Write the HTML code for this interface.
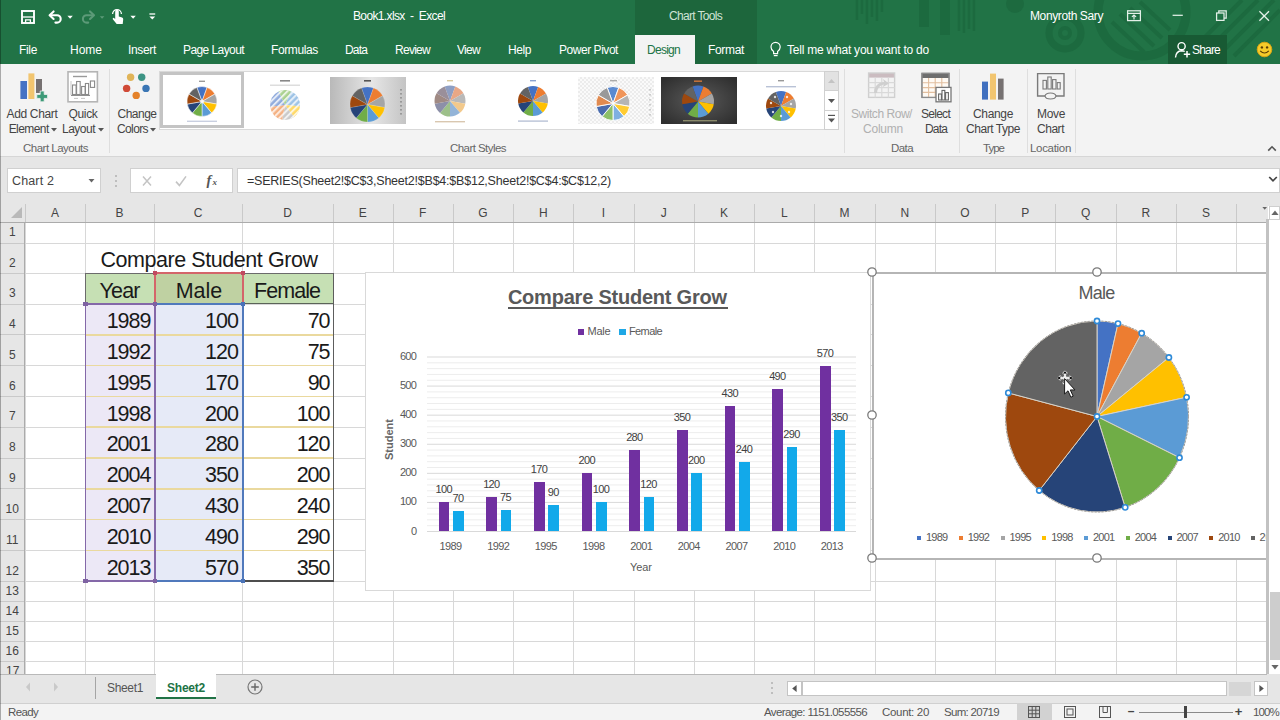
<!DOCTYPE html>
<html><head><meta charset="utf-8"><title>Book1.xlsx - Excel</title>
<style>
html,body{margin:0;padding:0;}
body{width:1280px;height:720px;overflow:hidden;position:relative;background:#fff;font-family:"Liberation Sans",sans-serif;}
.a{position:absolute;display:block;}
.t{position:absolute;white-space:pre;display:block;}
</style></head><body>
<div class='a' style='left:0px;top:0px;width:1280px;height:64px;background:#217346;'></div>
<svg class='a' style='left:850px;top:0px;' width='430' height='64' viewBox='0 0 430 64'>
<g stroke='#1c693e' fill='none' opacity='0.85'>
<path d='M7,0 v20 M12,0 v14 M17,0 v24 M22,0 v17 M27,0 v21 M32,0 v12' stroke-width='2.4'/>
<path d='M74,0 v27' stroke-width='10'/><path d='M95,0 v35' stroke-width='10'/>
<path d='M109,0 v31 M114,0 v33 M119,0 v29 M124,0 v31' stroke-width='2.4'/>
<circle cx='215' cy='33' r='16' stroke-width='7'/>
<circle cx='215' cy='33' r='5' stroke-width='4'/>
<circle cx='292' cy='12' r='44' stroke-width='9'/>
<path d='M262,22 l32,30 M270,14 l34,32 M280,8 l32,30 M290,2 l30,28' stroke-width='4'/>
<path d='M352,40 l40,-40 M362,46 l46,-46 M372,52 l52,-52 M384,56 l46,-46' stroke-width='4'/>
</g>
<circle cx='165' cy='4' r='9' fill='#1c693e' opacity='0.85'/>
</svg>
<div class='a' style='left:635px;top:0px;width:122px;height:64px;background:#1d663c;'></div>
<svg class='a' style='left:18px;top:7px;' width='150' height='22' viewBox='0 0 150 22'>
<g fill='none' stroke='#fff' stroke-width='1.9'>
<rect x='4' y='4' width='12' height='12'/>
<path d='M4,10 h12' stroke-width='1.3'/>
<path d='M7.6,16 v-3.2 h4.8 v3.2' stroke-width='1.3'/>
</g>
<g fill='none' stroke='#fff' stroke-width='2.1' stroke-linecap='round' stroke-linejoin='round'>
<path d='M35.6,4.4 L31.6,8.2 L35.6,12'/>
<path d='M32.4,8.2 H39 A3.7,3.7 0 0 1 39,15.6 H37.4'/>
</g>
<path d='M49.4,8.8 h5.4 l-2.7,3z' fill='#fff'/>
<g fill='none' stroke='#5c9a78' stroke-width='2.1' stroke-linecap='round' stroke-linejoin='round'>
<path d='M72,4.4 L76,8.2 L72,12'/>
<path d='M75.2,8.2 H68.6 A3.7,3.7 0 0 0 68.6,15.6 H70.2'/>
</g>
<path d='M81.8,9.2 h4.6 l-2.3,2.6z' fill='#5c9a78'/>
<g fill='#fff' stroke='none'>
<path d='M97.2,4.6 a1.8,1.8 0 0 1 3.6,0 v5 l3.3,0.9 q1.3,0.5 1.1,2 l-0.5,4.4 h-6 l-3.9,-4.7 q-0.5,-1.5 0.9,-1.5 l1.5,1.2 z'/>
</g>
<path d='M94.6,7 a4.4,4.4 0 0 1 8.8,0' fill='none' stroke='#fff' stroke-width='1.3'/>
<path d='M112.4,8.8 h5.4 l-2.7,3z' fill='#fff'/>
<path d='M131.4,7 h5.8' stroke='#fff' stroke-width='1.3'/>
<path d='M131.4,9.4 h5.8 l-2.9,3.2z' fill='#fff'/>
</svg>
<span class='t' style='left:353.00px;top:10.42px;font-size:12px;line-height:12px;color:#fff;letter-spacing:-0.635px;'>Book1.xlsx  -  Excel</span>
<span class='t' style='left:669.00px;top:10.42px;font-size:12px;line-height:12px;color:#cfe3d6;letter-spacing:-0.680px;'>Chart Tools</span>
<span class='t' style='left:1030.00px;top:10.42px;font-size:12px;line-height:12px;color:#fff;letter-spacing:-0.387px;'>Monyroth Sary</span>
<svg class='a' style='left:1120px;top:6px;' width='160' height='22' viewBox='0 0 160 22'>
<g fill='none' stroke='#e3f0e8' stroke-width='1.25'>
<rect x='7.6' y='4.8' width='12.8' height='9.8'/>
<path d='M7.6,7.4 h12.8'/>
<path d='M14,13.4 v-4.2 M11.9,10.9 l2.1,-1.9 l2.1,1.9' stroke-width='1.2'/>
<path d='M52.6,9.3 h10.2'/>
<rect x='96.6' y='7' width='7.4' height='7.4'/>
<path d='M98.8,7 v-2.2 h7.4 v7.4 h-2.2'/>
<path d='M139.4,5.2 l9.6,9.6 M149,5.2 l-9.6,9.6' stroke-width='1.3'/>
</g>
</svg>
<span class='t' style='left:19.00px;top:44.22px;font-size:12px;line-height:12px;color:#fff;letter-spacing:-0.336px;'>File</span>
<span class='t' style='left:70.00px;top:44.22px;font-size:12px;line-height:12px;color:#fff;'>Home</span>
<span class='t' style='left:128.00px;top:44.22px;font-size:12px;line-height:12px;color:#fff;letter-spacing:-0.336px;'>Insert</span>
<span class='t' style='left:183.00px;top:44.22px;font-size:12px;line-height:12px;color:#fff;letter-spacing:-0.581px;'>Page Layout</span>
<span class='t' style='left:271.00px;top:44.22px;font-size:12px;line-height:12px;color:#fff;letter-spacing:-0.377px;'>Formulas</span>
<span class='t' style='left:345.00px;top:44.22px;font-size:12px;line-height:12px;color:#fff;letter-spacing:-0.840px;'>Data</span>
<span class='t' style='left:395.00px;top:44.22px;font-size:12px;line-height:12px;color:#fff;letter-spacing:-0.727px;'>Review</span>
<span class='t' style='left:457.00px;top:44.22px;font-size:12px;line-height:12px;color:#fff;letter-spacing:-0.699px;'>View</span>
<span class='t' style='left:508.00px;top:44.22px;font-size:12px;line-height:12px;color:#fff;letter-spacing:-0.422px;'>Help</span>
<span class='t' style='left:559.00px;top:44.22px;font-size:12px;line-height:12px;color:#fff;letter-spacing:-0.457px;'>Power Pivot</span>
<div class='a' style='left:635px;top:35px;width:60px;height:30px;background:#f3f3f3;'></div>
<span class='t' style='left:647.00px;top:44.22px;font-size:12px;line-height:12px;color:#217346;letter-spacing:-0.727px;'>Design</span>
<span class='t' style='left:708.00px;top:44.22px;font-size:12px;line-height:12px;color:#fff;letter-spacing:-0.336px;'>Format</span>
<svg class='a' style='left:768px;top:40px;' width='16' height='20' viewBox='0 0 16 20'>
<g fill='none' stroke='#fff' stroke-width='1.2'>
<path d='M5.6,11.5 q-2.6,-2 -2.6,-4.6 a4.6,4.6 0 0 1 9.2,0 q0,2.6 -2.6,4.6 v2.2 h-4 z'/>
<path d='M5.8,15.6 h3.8'/>
</g></svg>
<span class='t' style='left:787.00px;top:44.22px;font-size:12px;line-height:12px;color:#fff;letter-spacing:-0.225px;'>Tell me what you want to do</span>
<div class='a' style='left:1168px;top:35px;width:59px;height:29px;background:#185a34;'></div>
<svg class='a' style='left:1174px;top:40px;' width='18' height='20' viewBox='0 0 18 20'>
<g fill='none' stroke='#fff' stroke-width='1.4'>
<circle cx='7.6' cy='6.2' r='3.6'/>
<path d='M1.5,17.5 q0.5,-6.5 6,-6.8 q2,0 3.2,0.8'/>
<path d='M13,11 v6.4 M9.8,14.2 h6.4' stroke-width='1.5'/>
</g></svg>
<span class='t' style='left:1192.00px;top:44.22px;font-size:12px;line-height:12px;color:#fff;letter-spacing:-0.806px;'>Share</span>
<svg class='a' style='left:1254px;top:39px;' width='22' height='22' viewBox='0 0 22 22'>
<circle cx='10.5' cy='10.5' r='7.3' fill='#f7cb2a' stroke='#d9a514' stroke-width='1'/>
<circle cx='7.9' cy='8.4' r='1.2' fill='#5a3d05'/><circle cx='13.1' cy='8.4' r='1.2' fill='#5a3d05'/>
<path d='M6.2,11.8 q4.3,4.4 8.6,0' fill='none' stroke='#5a3d05' stroke-width='1.2'/>
</svg>
<div class='a' style='left:0px;top:64px;width:1280px;height:92px;background:#f3f3f3;'></div>
<div class='a' style='left:0px;top:156px;width:1280px;height:1px;background:#d6d6d6;'></div>
<svg class='a' style='left:16px;top:70px;' width='36' height='36' viewBox='0 0 36 36'>
<rect x='4.4' y='11' width='6.6' height='18' fill='#4472c4'/>
<rect x='12.4' y='3.4' width='6' height='25.6' fill='#f2c56f'/>
<rect x='20' y='9' width='6' height='14' fill='#767171'/>
<path d='M24.2,21 h4 v3.4 h3.4 v4 h-3.4 v3.4 h-4 v-3.4 h-3.4 v-4 h3.4z' fill='#3d9a78' stroke='#f3f3f3' stroke-width='0.8'/>
</svg>
<span class='t' style='left:6.50px;top:107.52px;font-size:12px;line-height:12px;color:#444;letter-spacing:-0.337px;'>Add Chart</span>
<span class='t' style='left:8.70px;top:123.22px;font-size:12px;line-height:12px;color:#444;letter-spacing:-0.576px;'>Element</span>
<svg class='a' style='left:51px;top:127.5px;' width='6' height='4' viewBox='0 0 6 4'><path d='M0,0 h6 l-3,3.4z' fill='#555'/></svg>
<svg class='a' style='left:66px;top:70px;' width='34' height='34' viewBox='0 0 34 34'>
<rect x='2' y='1.8' width='29.4' height='30' fill='#fff' stroke='#b5b5b5' stroke-width='1.6'/>
<path d='M7,6.5 h14' stroke='#9a9a9a' stroke-width='1.4'/>
<g fill='none' stroke='#8a8a8a' stroke-width='1.1'>
<rect x='6.5' y='15' width='3.6' height='9.5'/><rect x='10.6' y='11.5' width='3.6' height='13'/>
<rect x='15.6' y='16.5' width='3.6' height='8'/><rect x='19.4' y='13.5' width='3.2' height='11'/>
<rect x='24.4' y='11' width='4.2' height='6.4'/>
</g>
<path d='M5,25.4 h19' stroke='#8a8a8a' stroke-width='1.1'/>
<path d='M5,11 v14 M8,28.4 h4 M15,28.4 h4' stroke='#c5c5c5' stroke-width='1'/>
</svg>
<span class='t' style='left:68.50px;top:107.52px;font-size:12px;line-height:12px;color:#444;letter-spacing:-0.338px;'>Quick</span>
<span class='t' style='left:62.00px;top:123.22px;font-size:12px;line-height:12px;color:#444;letter-spacing:-0.505px;'>Layout</span>
<svg class='a' style='left:98px;top:127.5px;' width='6' height='4' viewBox='0 0 6 4'><path d='M0,0 h6 l-3,3.4z' fill='#555'/></svg>
<span class='t' style='left:23.00px;top:142.78px;font-size:11.5px;line-height:11.5px;color:#666;letter-spacing:-0.508px;'>Chart Layouts</span>
<div class='a' style='left:109px;top:69px;width:1px;height:84px;background:#dedede;'></div>
<svg class='a' style='left:120px;top:70px;' width='34' height='32' viewBox='0 0 34 32'>
<circle cx='10.6' cy='7.2' r='3.7' fill='#e0b458'/><circle cx='21.7' cy='7.2' r='3.7' fill='#3d9484'/>
<circle cx='6.6' cy='18.4' r='3.7' fill='#d04a37'/><circle cx='26' cy='18.4' r='3.7' fill='#3a76b4'/>
<circle cx='16.2' cy='25.4' r='3.7' fill='#e4822a'/>
</svg>
<span class='t' style='left:117.50px;top:107.52px;font-size:12px;line-height:12px;color:#444;letter-spacing:-0.508px;'>Change</span>
<span class='t' style='left:117.00px;top:123.22px;font-size:12px;line-height:12px;color:#444;letter-spacing:-0.615px;'>Colors</span>
<svg class='a' style='left:150px;top:127.5px;' width='6' height='4' viewBox='0 0 6 4'><path d='M0,0 h6 l-3,3.4z' fill='#555'/></svg>
<div class='a' style='left:159px;top:71px;width:680px;height:59px;background:#fff;border:1px solid #d9d9d9;box-sizing:border-box;'></div>
<div class='a' style='left:160px;top:72px;width:84px;height:56px;background:#fff;border:3px solid #c4c4c4;box-sizing:border-box;'></div>
<svg class='a' style='left:180px;top:78px;' width='44' height='48' viewBox='0 0 44 48'><rect x='19' y='2.6' width='6' height='1.4' fill='#999'/><path d='M22.00,23.50 L16.86,9.41 A15,15 0 0 1 27.12,9.40 Z' fill='#4472c4' stroke='#fff' stroke-width='0.5'/><path d='M22.00,23.50 L27.12,9.40 A15,15 0 0 1 34.98,15.99 Z' fill='#ed7d31' stroke='#fff' stroke-width='0.5'/><path d='M22.00,23.50 L34.98,15.99 A15,15 0 0 1 36.77,26.09 Z' fill='#a5a5a5' stroke='#fff' stroke-width='0.5'/><path d='M22.00,23.50 L36.77,26.09 A15,15 0 0 1 31.65,34.98 Z' fill='#ffc000' stroke='#fff' stroke-width='0.5'/><path d='M22.00,23.50 L31.65,34.98 A15,15 0 0 1 22.01,38.50 Z' fill='#5b9bd5' stroke='#fff' stroke-width='0.5'/><path d='M22.00,23.50 L22.01,38.50 A15,15 0 0 1 12.37,35.00 Z' fill='#70ad47' stroke='#fff' stroke-width='0.5'/><path d='M22.00,23.50 L12.37,35.00 A15,15 0 0 1 7.23,26.12 Z' fill='#264478' stroke='#fff' stroke-width='0.5'/><path d='M22.00,23.50 L7.23,26.12 A15,15 0 0 1 9.00,16.01 Z' fill='#9e480e' stroke='#fff' stroke-width='0.5'/><path d='M22.00,23.50 L9.00,16.01 A15,15 0 0 1 16.86,9.41 Z' fill='#636363' stroke='#fff' stroke-width='0.5'/><circle cx='22' cy='23.5' r='2' fill='#fff' opacity='.7'/><rect x='7' y='42.6' width='30' height='1.4' fill='#c9cfe0'/></svg>
<svg class='a' style='left:262px;top:78px;' width='46' height='48' viewBox='0 0 46 48'><rect x='18' y='2' width='10' height='1.6' fill='#888'/><rect x='8' y='6.6' width='30' height='1.2' fill='#d5d5d5'/><defs><pattern id='st' width='4.4' height='4.4' patternUnits='userSpaceOnUse' patternTransform='rotate(-45)'><rect width='4.4' height='2' fill='#fff' opacity='.75'/></pattern></defs><path d='M23.00,27.00 L28.84,13.18 A15,15 0 0 1 37.94,28.29 Z' fill='#9dc3e6'/><path d='M23.00,27.00 L37.94,28.29 A15,15 0 0 1 32.04,38.97 Z' fill='#ffd966'/><path d='M23.00,27.00 L32.04,38.97 A15,15 0 0 1 20.16,41.73 Z' fill='#c9c9c9'/><path d='M23.00,27.00 L20.16,41.73 A15,15 0 0 1 8.11,28.85 Z' fill='#f4b183'/><path d='M23.00,27.00 L8.11,28.85 A15,15 0 0 1 16.64,13.41 Z' fill='#8faadc'/><path d='M23.00,27.00 L16.64,13.41 A15,15 0 0 1 28.84,13.18 Z' fill='#a9d18e'/><circle cx='23' cy='27' r='15' fill='url(#st)'/></svg>
<div class='a' style='left:330px;top:77px;width:76px;height:47px;background:linear-gradient(90deg,#b9b9b9,#e6e6e6 55%,#c4c4c4);'></div>
<svg class='a' style='left:330px;top:77px;' width='76' height='47' viewBox='0 0 76 47'><rect x='34' y='3' width='7' height='1.6' fill='#555'/><path d='M37.50,27.50 L31.50,11.06 A17.5,17.5 0 0 1 43.47,11.05 Z' fill='#4472c4' stroke='#ffffff55' stroke-width='0.4'/><path d='M37.50,27.50 L43.47,11.05 A17.5,17.5 0 0 1 52.65,18.74 Z' fill='#ed7d31' stroke='#ffffff55' stroke-width='0.4'/><path d='M37.50,27.50 L52.65,18.74 A17.5,17.5 0 0 1 54.74,30.52 Z' fill='#a5a5a5' stroke='#ffffff55' stroke-width='0.4'/><path d='M37.50,27.50 L54.74,30.52 A17.5,17.5 0 0 1 48.76,40.90 Z' fill='#ffc000' stroke='#ffffff55' stroke-width='0.4'/><path d='M37.50,27.50 L48.76,40.90 A17.5,17.5 0 0 1 37.52,45.00 Z' fill='#5b9bd5' stroke='#ffffff55' stroke-width='0.4'/><path d='M37.50,27.50 L37.52,45.00 A17.5,17.5 0 0 1 26.26,40.92 Z' fill='#70ad47' stroke='#ffffff55' stroke-width='0.4'/><path d='M37.50,27.50 L26.26,40.92 A17.5,17.5 0 0 1 20.27,30.55 Z' fill='#264478' stroke='#ffffff55' stroke-width='0.4'/><path d='M37.50,27.50 L20.27,30.55 A17.5,17.5 0 0 1 22.34,18.76 Z' fill='#9e480e' stroke='#ffffff55' stroke-width='0.4'/><path d='M37.50,27.50 L22.34,18.76 A17.5,17.5 0 0 1 31.50,11.06 Z' fill='#636363' stroke='#ffffff55' stroke-width='0.4'/><g fill='#999'><rect x='70' y='12' width='2' height='1.6'/><rect x='70' y='16' width='2' height='1.6'/><rect x='70' y='20' width='2' height='1.6'/><rect x='70' y='24' width='2' height='1.6'/><rect x='70' y='28' width='2' height='1.6'/><rect x='70' y='32' width='2' height='1.6'/><rect x='70' y='36' width='2' height='1.6'/></g></svg>
<svg class='a' style='left:428px;top:78px;' width='44' height='48' viewBox='0 0 44 48'><rect x='19' y='2' width='6' height='1.4' fill='#d8c89a'/><path d='M22.00,23.00 L16.69,8.44 A15.5,15.5 0 0 1 27.29,8.43 Z' fill='#8e9fc4'/><path d='M22.00,23.00 L27.29,8.43 A15.5,15.5 0 0 1 35.42,15.24 Z' fill='#e8a786'/><path d='M22.00,23.00 L35.42,15.24 A15.5,15.5 0 0 1 37.27,25.68 Z' fill='#b9b9b9'/><path d='M22.00,23.00 L37.27,25.68 A15.5,15.5 0 0 1 31.97,34.86 Z' fill='#f2c98c'/><path d='M22.00,23.00 L31.97,34.86 A15.5,15.5 0 0 1 22.01,38.50 Z' fill='#93b4d8'/><path d='M22.00,23.00 L22.01,38.50 A15.5,15.5 0 0 1 12.05,34.88 Z' fill='#9dc08a'/><path d='M22.00,23.00 L12.05,34.88 A15.5,15.5 0 0 1 6.74,25.71 Z' fill='#8c8fa8'/><path d='M22.00,23.00 L6.74,25.71 A15.5,15.5 0 0 1 8.57,15.26 Z' fill='#a08a84'/><path d='M22.00,23.00 L8.57,15.26 A15.5,15.5 0 0 1 16.69,8.44 Z' fill='#9a8f9a'/><rect x='7' y='43' width='30' height='1.4' fill='#d9c7b0'/></svg>
<svg class='a' style='left:511px;top:78px;' width='44' height='48' viewBox='0 0 44 48'><rect x='19' y='2' width='6' height='1.4' fill='#8aa2d0'/><path d='M22.00,23.00 L16.86,8.91 A15,15 0 0 1 27.12,8.90 Z' fill='#4472c4'/><path d='M22.00,23.00 L27.12,8.90 A15,15 0 0 1 34.98,15.49 Z' fill='#ed7d31'/><path d='M22.00,23.00 L34.98,15.49 A15,15 0 0 1 36.77,25.59 Z' fill='#a5a5a5'/><path d='M22.00,23.00 L36.77,25.59 A15,15 0 0 1 31.65,34.48 Z' fill='#ffc000'/><path d='M22.00,23.00 L31.65,34.48 A15,15 0 0 1 22.01,38.00 Z' fill='#5b9bd5'/><path d='M22.00,23.00 L22.01,38.00 A15,15 0 0 1 12.37,34.50 Z' fill='#70ad47'/><path d='M22.00,23.00 L12.37,34.50 A15,15 0 0 1 7.23,25.62 Z' fill='#264478'/><path d='M22.00,23.00 L7.23,25.62 A15,15 0 0 1 9.00,15.51 Z' fill='#9e480e'/><path d='M22.00,23.00 L9.00,15.51 A15,15 0 0 1 16.86,8.91 Z' fill='#636363'/><rect x='7' y='42.4' width='30' height='1.4' fill='#b9c2d6'/></svg>
<div class='a' style='left:578px;top:77px;width:76px;height:47px;background:#ececec;'></div>
<svg class='a' style='left:578px;top:77px;' width='76' height='47' viewBox='0 0 76 47'><defs><pattern id='ck' width='4' height='4' patternUnits='userSpaceOnUse'><rect width='2' height='2' fill='#fafafa'/><rect x='2' y='2' width='2' height='2' fill='#fafafa'/></pattern></defs><rect width='76' height='47' fill='url(#ck)'/><rect x='32' y='3' width='7' height='1.4' fill='#aaa'/><path d='M35.00,26.50 L29.17,10.53 A17,17 0 0 1 40.80,10.52 Z' fill='#5b8ad0' stroke='#fff' stroke-width='0.9'/><path d='M35.00,26.50 L40.80,10.52 A17,17 0 0 1 49.71,17.99 Z' fill='#f0955a' stroke='#fff' stroke-width='0.9'/><path d='M35.00,26.50 L49.71,17.99 A17,17 0 0 1 51.74,29.44 Z' fill='#b5b5b5' stroke='#fff' stroke-width='0.9'/><path d='M35.00,26.50 L51.74,29.44 A17,17 0 0 1 45.94,39.51 Z' fill='#ffcc33' stroke='#fff' stroke-width='0.9'/><path d='M35.00,26.50 L45.94,39.51 A17,17 0 0 1 35.02,43.50 Z' fill='#7fb0e0' stroke='#fff' stroke-width='0.9'/><path d='M35.00,26.50 L35.02,43.50 A17,17 0 0 1 24.08,39.53 Z' fill='#8dc06a' stroke='#fff' stroke-width='0.9'/><path d='M35.00,26.50 L24.08,39.53 A17,17 0 0 1 18.26,29.47 Z' fill='#4a6cae' stroke='#fff' stroke-width='0.9'/><path d='M35.00,26.50 L18.26,29.47 A17,17 0 0 1 20.27,18.01 Z' fill='#e08a50' stroke='#fff' stroke-width='0.9'/><path d='M35.00,26.50 L20.27,18.01 A17,17 0 0 1 29.17,10.53 Z' fill='#999' stroke='#fff' stroke-width='0.9'/><g fill='#ccc'><rect x='71' y='12' width='2' height='1.6'/><rect x='71' y='17' width='2' height='1.6'/><rect x='71' y='22' width='2' height='1.6'/><rect x='71' y='27' width='2' height='1.6'/><rect x='71' y='32' width='2' height='1.6'/><rect x='71' y='37' width='2' height='1.6'/></g></svg>
<div class='a' style='left:661px;top:77px;width:76px;height:47px;background:radial-gradient(ellipse at center,#5a5a5a,#2f2f2f 90%);'></div>
<svg class='a' style='left:661px;top:77px;' width='76' height='47' viewBox='0 0 76 47'><rect x='33' y='3.4' width='8' height='1.6' fill='#c0703a'/><path d='M37.00,24.50 L31.51,9.47 A16,16 0 0 1 42.46,9.46 Z' fill='#4472c4'/><path d='M37.00,24.50 L42.46,9.46 A16,16 0 0 1 50.85,16.49 Z' fill='#ed7d31'/><path d='M37.00,24.50 L50.85,16.49 A16,16 0 0 1 52.76,27.26 Z' fill='#a5a5a5'/><path d='M37.00,24.50 L52.76,27.26 A16,16 0 0 1 47.30,36.75 Z' fill='#ffc000'/><path d='M37.00,24.50 L47.30,36.75 A16,16 0 0 1 37.01,40.50 Z' fill='#5b9bd5'/><path d='M37.00,24.50 L37.01,40.50 A16,16 0 0 1 26.73,36.77 Z' fill='#70ad47'/><path d='M37.00,24.50 L26.73,36.77 A16,16 0 0 1 21.25,27.29 Z' fill='#264478'/><path d='M37.00,24.50 L21.25,27.29 A16,16 0 0 1 23.14,16.51 Z' fill='#9e480e'/><path d='M37.00,24.50 L23.14,16.51 A16,16 0 0 1 31.51,9.47 Z' fill='#636363'/><rect x='22' y='43' width='34' height='1.4' fill='#8a8a6a'/></svg>
<svg class='a' style='left:758px;top:78px;' width='46' height='50' viewBox='0 0 46 50'><rect x='20' y='2' width='6' height='1.4' fill='#999'/><rect x='8' y='8' width='30' height='1.4' fill='#b9c2d6'/><path d='M23.00,28.00 L17.86,13.91 A15,15 0 0 1 28.12,13.90 Z' fill='#4472c4'/><path d='M23.00,28.00 L28.12,13.90 A15,15 0 0 1 35.98,20.49 Z' fill='#ed7d31'/><path d='M23.00,28.00 L35.98,20.49 A15,15 0 0 1 37.77,30.59 Z' fill='#a5a5a5'/><path d='M23.00,28.00 L37.77,30.59 A15,15 0 0 1 32.65,39.48 Z' fill='#ffc000'/><path d='M23.00,28.00 L32.65,39.48 A15,15 0 0 1 23.01,43.00 Z' fill='#5b9bd5'/><path d='M23.00,28.00 L23.01,43.00 A15,15 0 0 1 13.37,39.50 Z' fill='#70ad47'/><path d='M23.00,28.00 L13.37,39.50 A15,15 0 0 1 8.23,30.62 Z' fill='#264478'/><path d='M23.00,28.00 L8.23,30.62 A15,15 0 0 1 10.00,20.51 Z' fill='#9e480e'/><path d='M23.00,28.00 L10.00,20.51 A15,15 0 0 1 17.86,13.91 Z' fill='#636363'/><g fill='#fff' opacity='.8'><circle cx='29' cy='19' r='1.2'/><circle cx='33' cy='26' r='1.2'/><circle cx='31' cy='34' r='1.2'/><circle cx='23' cy='38' r='1.2'/><circle cx='15' cy='34' r='1.2'/><circle cx='13' cy='25' r='1.2'/><circle cx='17' cy='19' r='1.2'/></g></svg>
<div class='a' style='left:824px;top:71px;width:15px;height:59px;background:#fff;border:1px solid #d0d0d0;box-sizing:border-box;'></div>
<div class='a' style='left:824px;top:71px;width:15px;height:20px;background:#e2e2e2;border:1px solid #d0d0d0;box-sizing:border-box;'></div>
<div class='a' style='left:824px;top:110px;width:15px;height:1px;background:#d0d0d0;'></div>
<svg class='a' style='left:827px;top:78px;' width='9' height='6' viewBox='0 0 9 6'><path d='M1,5 h7 l-3.5,-4z' fill='#c3c3c3'/></svg>
<svg class='a' style='left:827px;top:98px;' width='9' height='6' viewBox='0 0 9 6'><path d='M1,1 h7 l-3.5,4z' fill='#555'/></svg>
<svg class='a' style='left:827px;top:114px;' width='9' height='10' viewBox='0 0 9 10'><path d='M1,1.4 h7' stroke='#555' stroke-width='1.2'/><path d='M1,4.4 h7 l-3.5,4z' fill='#555'/></svg>
<span class='t' style='left:450.00px;top:142.78px;font-size:11.5px;line-height:11.5px;color:#666;letter-spacing:-0.553px;'>Chart Styles</span>
<div class='a' style='left:844px;top:69px;width:1px;height:84px;background:#dedede;'></div>
<svg class='a' style='left:866px;top:70px;' width='32' height='30' viewBox='0 0 32 30'>
<rect x='2.6' y='3' width='26' height='4.6' fill='#cbbcc0'/>
<rect x='2.6' y='3' width='26' height='24.4' fill='none' stroke='#cfcfcf' stroke-width='1.4'/>
<g stroke='#d9d9d9' stroke-width='1.2'><path d='M9.2,7.6 v19.8 M15.8,7.6 v19.8 M22.4,7.6 v19.8 M2.6,12.6 h26 M2.6,17.6 h26 M2.6,22.6 h26'/></g>
<path d='M8,23 q0,-10 10,-11 l-1,-3 l6,4.4 l-6,3.6 l0.6,-2.6 q-6,1 -6.6,8.6z' fill='#cfcfcf'/>
</svg>
<span class='t' style='left:851.00px;top:107.52px;font-size:12px;line-height:12px;color:#b0b0b0;letter-spacing:-0.457px;'>Switch Row/</span>
<span class='t' style='left:863.00px;top:123.22px;font-size:12px;line-height:12px;color:#b0b0b0;letter-spacing:-0.227px;'>Column</span>
<svg class='a' style='left:919px;top:70px;' width='34' height='34' viewBox='0 0 34 34'>
<rect x='3' y='3.4' width='27' height='4.6' fill='#6e6e6e'/>
<rect x='3' y='3.4' width='27' height='24' fill='#fff' fill-opacity='0' stroke='#8c8c8c' stroke-width='1.3'/>
<rect x='3.6' y='8' width='25.8' height='18.8' fill='#fffaf4'/>
<rect x='3' y='3.4' width='27' height='4.6' fill='#6e6e6e'/>
<g stroke='#e2bf9f' stroke-width='1.1'><path d='M9.6,8 v19 M16.2,8 v19 M22.8,8 v19 M3,12.8 h27 M3,17.6 h27 M3,22.4 h27'/></g>
<rect x='3' y='3.4' width='27' height='24' fill='none' stroke='#8c8c8c' stroke-width='1.3'/>
<rect x='17' y='17.4' width='15' height='14.4' fill='#fff' stroke='#777' stroke-width='1.3'/>
<g fill='none' stroke='#666' stroke-width='1.1'><rect x='19.6' y='24' width='2.8' height='6'/><rect x='23' y='20.4' width='2.8' height='9.6'/><rect x='26.6' y='22.6' width='2.8' height='7.4'/></g>
</svg>
<span class='t' style='left:921.00px;top:107.52px;font-size:12px;line-height:12px;color:#444;letter-spacing:-0.727px;'>Select</span>
<span class='t' style='left:925.00px;top:123.22px;font-size:12px;line-height:12px;color:#444;letter-spacing:-0.840px;'>Data</span>
<span class='t' style='left:891.00px;top:142.78px;font-size:11.5px;line-height:11.5px;color:#666;letter-spacing:-0.574px;'>Data</span>
<div class='a' style='left:959px;top:69px;width:1px;height:84px;background:#dedede;'></div>
<svg class='a' style='left:978px;top:70px;' width='30' height='32' viewBox='0 0 30 32'>
<rect x='4' y='11.6' width='6' height='18' fill='#3f6fbf'/>
<rect x='12' y='3.6' width='6' height='26' fill='#f2c56f'/>
<rect x='20' y='8.6' width='5.6' height='21' fill='#767171'/>
</svg>
<span class='t' style='left:973.00px;top:107.52px;font-size:12px;line-height:12px;color:#444;letter-spacing:-0.341px;'>Change</span>
<span class='t' style='left:966.00px;top:123.22px;font-size:12px;line-height:12px;color:#444;letter-spacing:-0.448px;'>Chart Type</span>
<span class='t' style='left:983.00px;top:142.78px;font-size:11.5px;line-height:11.5px;color:#666;letter-spacing:-0.984px;'>Type</span>
<div class='a' style='left:1027px;top:69px;width:1px;height:84px;background:#dedede;'></div>
<svg class='a' style='left:1034px;top:70px;' width='34' height='32' viewBox='0 0 34 32'>
<g fill='none' stroke='#7a7a7a' stroke-width='1.4'>
<path d='M11,26 H3.6 V3.6 H30 V26 H22'/>
<path d='M11,26 q0.5,-3 5.5,-3 q5,0 5.5,3 q-0.5,3 -5.5,3 q-5,0 -5.5,-3z' stroke-width='1.2'/>
<rect x='9' y='10.4' width='3.4' height='8.6' stroke-width='1.1'/><rect x='13.8' y='7' width='3.4' height='12' stroke-width='1.1'/>
<rect x='18.6' y='9.6' width='3.4' height='9.4' stroke-width='1.1'/><rect x='23.2' y='12.6' width='3' height='6.4' stroke-width='1.1'/>
</g></svg>
<span class='t' style='left:1037.00px;top:107.52px;font-size:12px;line-height:12px;color:#444;letter-spacing:-0.336px;'>Move</span>
<span class='t' style='left:1037.00px;top:123.22px;font-size:12px;line-height:12px;color:#444;letter-spacing:-0.469px;'>Chart</span>
<span class='t' style='left:1030.00px;top:142.78px;font-size:11.5px;line-height:11.5px;color:#666;letter-spacing:-0.311px;'>Location</span>
<div class='a' style='left:1075px;top:69px;width:1px;height:84px;background:#dedede;'></div>
<svg class='a' style='left:1266px;top:143.5px;' width='12' height='9' viewBox='0 0 12 9'><path d='M2.2,6.6 L6,2.8 L9.8,6.6' fill='none' stroke='#555' stroke-width='1.6'/></svg>
<div class='a' style='left:0px;top:157px;width:1280px;height:43px;background:#e6e6e6;'></div>
<div class='a' style='left:7px;top:168px;width:94px;height:25px;background:#fff;border:1px solid #d0d0d0;box-sizing:border-box;'></div>
<span class='t' style='left:12.00px;top:174.87px;font-size:12.5px;line-height:12.5px;color:#444;letter-spacing:0.143px;'>Chart 2</span>
<svg class='a' style='left:86.5px;top:178px;' width='10' height='7' viewBox='0 0 10 7'><path d='M1.5,1 h6 l-3,3.6z' fill='#666'/></svg>
<svg class='a' style='left:113px;top:173px;' width='6' height='16' viewBox='0 0 6 16'><g fill='#b0b0b0'><circle cx='3' cy='3' r='1'/><circle cx='3' cy='8' r='1'/><circle cx='3' cy='13' r='1'/></g></svg>
<div class='a' style='left:130px;top:168px;width:103px;height:25px;background:#fff;border:1px solid #d0d0d0;box-sizing:border-box;'></div>
<svg class='a' style='left:140px;top:174px;' width='90' height='14' viewBox='0 0 90 14'>
<path d='M3,2.4 l8,9 M11,2.4 l-8,9' stroke='#c4c4c4' stroke-width='1.5' fill='none'/>
<path d='M36,7.6 l3.4,3.8 l6.6,-9' stroke='#c4c4c4' stroke-width='1.6' fill='none'/>
</svg>
<span class='t' style='left:206.50px;top:173.16px;font-size:14.5px;line-height:14.5px;color:#555;font-weight:700;font-family:"Liberation Serif";'><i>f</i></span>
<span class='t' style='left:212.50px;top:178.44px;font-size:9px;line-height:9px;color:#555;font-weight:700;font-family:"Liberation Serif";'><i>x</i></span>
<div class='a' style='left:237px;top:168px;width:1043px;height:25px;background:#fff;border:1px solid #d0d0d0;box-sizing:border-box;'></div>
<span class='t' style='left:247.00px;top:174.87px;font-size:12.5px;line-height:12.5px;color:#333;letter-spacing:-0.224px;'>=SERIES(Sheet2!$C$3,Sheet2!$B$4:$B$12,Sheet2!$C$4:$C$12,2)</span>
<svg class='a' style='left:1267px;top:175px;' width='12' height='9' viewBox='0 0 12 9'><path d='M2.2,2 L6,5.8 L9.8,2' fill='none' stroke='#444' stroke-width='1.7'/></svg>
<div class='a' style='left:0px;top:200px;width:1267px;height:474px;background:#fff;'></div>
<div class='a' style='left:0px;top:200px;width:1280px;height:22px;background:#e6e6e6;'></div>
<div class='a' style='left:0px;top:222px;width:1267px;height:1px;background:#ababab;'></div>
<span class='t' style='left:50.99px;top:206.72px;font-size:12px;line-height:12px;color:#444;'>A</span>
<span class='t' style='left:115.49px;top:206.72px;font-size:12px;line-height:12px;color:#444;'>B</span>
<span class='t' style='left:193.66px;top:206.72px;font-size:12px;line-height:12px;color:#444;'>C</span>
<span class='t' style='left:283.16px;top:206.72px;font-size:12px;line-height:12px;color:#444;'>D</span>
<span class='t' style='left:358.79px;top:206.72px;font-size:12px;line-height:12px;color:#444;'>E</span>
<span class='t' style='left:419.08px;top:206.72px;font-size:12px;line-height:12px;color:#444;'>F</span>
<span class='t' style='left:478.33px;top:206.72px;font-size:12px;line-height:12px;color:#444;'>G</span>
<span class='t' style='left:538.91px;top:206.72px;font-size:12px;line-height:12px;color:#444;'>H</span>
<span class='t' style='left:601.83px;top:206.72px;font-size:12px;line-height:12px;color:#444;'>I</span>
<span class='t' style='left:660.75px;top:206.72px;font-size:12px;line-height:12px;color:#444;'>J</span>
<span class='t' style='left:719.99px;top:206.72px;font-size:12px;line-height:12px;color:#444;'>K</span>
<span class='t' style='left:780.91px;top:206.72px;font-size:12px;line-height:12px;color:#444;'>L</span>
<span class='t' style='left:839.50px;top:206.72px;font-size:12px;line-height:12px;color:#444;'>M</span>
<span class='t' style='left:900.41px;top:206.72px;font-size:12px;line-height:12px;color:#444;'>N</span>
<span class='t' style='left:960.33px;top:206.72px;font-size:12px;line-height:12px;color:#444;'>O</span>
<span class='t' style='left:1021.24px;top:206.72px;font-size:12px;line-height:12px;color:#444;'>P</span>
<span class='t' style='left:1080.88px;top:206.72px;font-size:12px;line-height:12px;color:#444;'>Q</span>
<span class='t' style='left:1141.46px;top:206.72px;font-size:12px;line-height:12px;color:#444;'>R</span>
<span class='t' style='left:1202.04px;top:206.72px;font-size:12px;line-height:12px;color:#444;'>S</span>
<div class='a' style='left:25px;top:204px;width:1px;height:18px;background:#c9c9c9;'></div>
<div class='a' style='left:25px;top:223px;width:1px;height:451px;background:#d8d8d8;'></div>
<div class='a' style='left:85px;top:204px;width:1px;height:18px;background:#c9c9c9;'></div>
<div class='a' style='left:85px;top:223px;width:1px;height:451px;background:#d8d8d8;'></div>
<div class='a' style='left:154px;top:204px;width:1px;height:18px;background:#c9c9c9;'></div>
<div class='a' style='left:154px;top:223px;width:1px;height:451px;background:#d8d8d8;'></div>
<div class='a' style='left:242px;top:204px;width:1px;height:18px;background:#c9c9c9;'></div>
<div class='a' style='left:242px;top:223px;width:1px;height:451px;background:#d8d8d8;'></div>
<div class='a' style='left:333px;top:204px;width:1px;height:18px;background:#c9c9c9;'></div>
<div class='a' style='left:333px;top:223px;width:1px;height:451px;background:#d8d8d8;'></div>
<div class='a' style='left:392.6px;top:204px;width:1px;height:18px;background:#c9c9c9;'></div>
<div class='a' style='left:392.6px;top:223px;width:1px;height:451px;background:#d8d8d8;'></div>
<div class='a' style='left:452.9px;top:204px;width:1px;height:18px;background:#c9c9c9;'></div>
<div class='a' style='left:452.9px;top:223px;width:1px;height:451px;background:#d8d8d8;'></div>
<div class='a' style='left:513.1px;top:204px;width:1px;height:18px;background:#c9c9c9;'></div>
<div class='a' style='left:513.1px;top:223px;width:1px;height:451px;background:#d8d8d8;'></div>
<div class='a' style='left:573.4px;top:204px;width:1px;height:18px;background:#c9c9c9;'></div>
<div class='a' style='left:573.4px;top:223px;width:1px;height:451px;background:#d8d8d8;'></div>
<div class='a' style='left:633.6px;top:204px;width:1px;height:18px;background:#c9c9c9;'></div>
<div class='a' style='left:633.6px;top:223px;width:1px;height:451px;background:#d8d8d8;'></div>
<div class='a' style='left:693.9px;top:204px;width:1px;height:18px;background:#c9c9c9;'></div>
<div class='a' style='left:693.9px;top:223px;width:1px;height:451px;background:#d8d8d8;'></div>
<div class='a' style='left:754.1px;top:204px;width:1px;height:18px;background:#c9c9c9;'></div>
<div class='a' style='left:754.1px;top:223px;width:1px;height:451px;background:#d8d8d8;'></div>
<div class='a' style='left:814.4px;top:204px;width:1px;height:18px;background:#c9c9c9;'></div>
<div class='a' style='left:814.4px;top:223px;width:1px;height:451px;background:#d8d8d8;'></div>
<div class='a' style='left:874.6px;top:204px;width:1px;height:18px;background:#c9c9c9;'></div>
<div class='a' style='left:874.6px;top:223px;width:1px;height:451px;background:#d8d8d8;'></div>
<div class='a' style='left:934.9px;top:204px;width:1px;height:18px;background:#c9c9c9;'></div>
<div class='a' style='left:934.9px;top:223px;width:1px;height:451px;background:#d8d8d8;'></div>
<div class='a' style='left:995.1px;top:204px;width:1px;height:18px;background:#c9c9c9;'></div>
<div class='a' style='left:995.1px;top:223px;width:1px;height:451px;background:#d8d8d8;'></div>
<div class='a' style='left:1055.4px;top:204px;width:1px;height:18px;background:#c9c9c9;'></div>
<div class='a' style='left:1055.4px;top:223px;width:1px;height:451px;background:#d8d8d8;'></div>
<div class='a' style='left:1115.7px;top:204px;width:1px;height:18px;background:#c9c9c9;'></div>
<div class='a' style='left:1115.7px;top:223px;width:1px;height:451px;background:#d8d8d8;'></div>
<div class='a' style='left:1175.9px;top:204px;width:1px;height:18px;background:#c9c9c9;'></div>
<div class='a' style='left:1175.9px;top:223px;width:1px;height:451px;background:#d8d8d8;'></div>
<div class='a' style='left:1236.2px;top:204px;width:1px;height:18px;background:#c9c9c9;'></div>
<div class='a' style='left:1236.2px;top:223px;width:1px;height:451px;background:#d8d8d8;'></div>
<svg class='a' style='left:8px;top:204px;' width='16' height='16' viewBox='0 0 16 16'><path d='M14,3 v11 h-11z' fill='#b9b9b9'/></svg>
<div class='a' style='left:0px;top:223px;width:25px;height:451px;background:#e6e6e6;'></div>
<div class='a' style='left:24px;top:223px;width:1px;height:451px;background:#ababab;'></div>
<span class='t' style='left:8.96px;top:226.22px;font-size:12px;line-height:12px;color:#444;'>1</span>
<span class='t' style='left:8.96px;top:256.72px;font-size:12px;line-height:12px;color:#444;'>2</span>
<span class='t' style='left:8.96px;top:287.22px;font-size:12px;line-height:12px;color:#444;'>3</span>
<span class='t' style='left:8.96px;top:318.02px;font-size:12px;line-height:12px;color:#444;'>4</span>
<span class='t' style='left:8.96px;top:348.82px;font-size:12px;line-height:12px;color:#444;'>5</span>
<span class='t' style='left:8.96px;top:379.62px;font-size:12px;line-height:12px;color:#444;'>6</span>
<span class='t' style='left:8.96px;top:410.42px;font-size:12px;line-height:12px;color:#444;'>7</span>
<span class='t' style='left:8.96px;top:441.22px;font-size:12px;line-height:12px;color:#444;'>8</span>
<span class='t' style='left:8.96px;top:472.02px;font-size:12px;line-height:12px;color:#444;'>9</span>
<span class='t' style='left:5.62px;top:502.82px;font-size:12px;line-height:12px;color:#444;'>10</span>
<span class='t' style='left:6.07px;top:533.62px;font-size:12px;line-height:12px;color:#444;'>11</span>
<span class='t' style='left:5.62px;top:564.52px;font-size:12px;line-height:12px;color:#444;'>12</span>
<span class='t' style='left:5.62px;top:584.72px;font-size:12px;line-height:12px;color:#444;'>13</span>
<span class='t' style='left:5.62px;top:604.72px;font-size:12px;line-height:12px;color:#444;'>14</span>
<span class='t' style='left:5.62px;top:624.72px;font-size:12px;line-height:12px;color:#444;'>15</span>
<span class='t' style='left:5.62px;top:644.72px;font-size:12px;line-height:12px;color:#444;'>16</span>
<div class='a' style='left:0;top:662px;width:24px;height:12px;overflow:hidden'><span class='t' style='left:6px;top:3px;font-size:12px;line-height:12px;color:#444'>17</span></div>
<div class='a' style='left:0px;top:242.5px;width:24px;height:1px;background:#c9c9c9;'></div>
<div class='a' style='left:25px;top:242.5px;width:1242px;height:1px;background:#d8d8d8;'></div>
<div class='a' style='left:0px;top:273px;width:24px;height:1px;background:#c9c9c9;'></div>
<div class='a' style='left:25px;top:273px;width:1242px;height:1px;background:#d8d8d8;'></div>
<div class='a' style='left:0px;top:303.5px;width:24px;height:1px;background:#c9c9c9;'></div>
<div class='a' style='left:25px;top:303.5px;width:1242px;height:1px;background:#d8d8d8;'></div>
<div class='a' style='left:0px;top:334.3px;width:24px;height:1px;background:#c9c9c9;'></div>
<div class='a' style='left:25px;top:334.3px;width:1242px;height:1px;background:#d8d8d8;'></div>
<div class='a' style='left:0px;top:365.1px;width:24px;height:1px;background:#c9c9c9;'></div>
<div class='a' style='left:25px;top:365.1px;width:1242px;height:1px;background:#d8d8d8;'></div>
<div class='a' style='left:0px;top:395.9px;width:24px;height:1px;background:#c9c9c9;'></div>
<div class='a' style='left:25px;top:395.9px;width:1242px;height:1px;background:#d8d8d8;'></div>
<div class='a' style='left:0px;top:426.7px;width:24px;height:1px;background:#c9c9c9;'></div>
<div class='a' style='left:25px;top:426.7px;width:1242px;height:1px;background:#d8d8d8;'></div>
<div class='a' style='left:0px;top:457.5px;width:24px;height:1px;background:#c9c9c9;'></div>
<div class='a' style='left:25px;top:457.5px;width:1242px;height:1px;background:#d8d8d8;'></div>
<div class='a' style='left:0px;top:488.3px;width:24px;height:1px;background:#c9c9c9;'></div>
<div class='a' style='left:25px;top:488.3px;width:1242px;height:1px;background:#d8d8d8;'></div>
<div class='a' style='left:0px;top:519.1px;width:24px;height:1px;background:#c9c9c9;'></div>
<div class='a' style='left:25px;top:519.1px;width:1242px;height:1px;background:#d8d8d8;'></div>
<div class='a' style='left:0px;top:549.9px;width:24px;height:1px;background:#c9c9c9;'></div>
<div class='a' style='left:25px;top:549.9px;width:1242px;height:1px;background:#d8d8d8;'></div>
<div class='a' style='left:0px;top:580.8px;width:24px;height:1px;background:#c9c9c9;'></div>
<div class='a' style='left:25px;top:580.8px;width:1242px;height:1px;background:#d8d8d8;'></div>
<div class='a' style='left:0px;top:601px;width:24px;height:1px;background:#c9c9c9;'></div>
<div class='a' style='left:25px;top:601px;width:1242px;height:1px;background:#d8d8d8;'></div>
<div class='a' style='left:0px;top:621px;width:24px;height:1px;background:#c9c9c9;'></div>
<div class='a' style='left:25px;top:621px;width:1242px;height:1px;background:#d8d8d8;'></div>
<div class='a' style='left:0px;top:641px;width:24px;height:1px;background:#c9c9c9;'></div>
<div class='a' style='left:25px;top:641px;width:1242px;height:1px;background:#d8d8d8;'></div>
<div class='a' style='left:0px;top:661px;width:24px;height:1px;background:#c9c9c9;'></div>
<div class='a' style='left:25px;top:661px;width:1242px;height:1px;background:#d8d8d8;'></div>
<div class='a' style='left:86px;top:273.5px;width:68px;height:30px;background:#c6e0b4;'></div>
<div class='a' style='left:155px;top:273.5px;width:88px;height:30px;background:#bfd1a2;'></div>
<div class='a' style='left:243px;top:273.5px;width:90px;height:30px;background:#c6e0b4;'></div>
<div class='a' style='left:86px;top:304.5px;width:68px;height:276px;background:#ece8f6;'></div>
<div class='a' style='left:155px;top:304.5px;width:87px;height:276px;background:#e6eaf7;'></div>
<div class='a' style='left:86px;top:333.90000000000003px;width:247px;height:1.8px;background:#ead99e;'></div>
<div class='a' style='left:86px;top:364.70000000000005px;width:247px;height:1.8px;background:#ead99e;'></div>
<div class='a' style='left:86px;top:395.5px;width:247px;height:1.8px;background:#ead99e;'></div>
<div class='a' style='left:86px;top:426.3px;width:247px;height:1.8px;background:#ead99e;'></div>
<div class='a' style='left:86px;top:457.1px;width:247px;height:1.8px;background:#ead99e;'></div>
<div class='a' style='left:86px;top:487.90000000000003px;width:247px;height:1.8px;background:#ead99e;'></div>
<div class='a' style='left:86px;top:518.7px;width:247px;height:1.8px;background:#ead99e;'></div>
<div class='a' style='left:86px;top:549.5px;width:247px;height:1.8px;background:#ead99e;'></div>
<div class='a' style='left:85px;top:272.6px;width:249px;height:1px;background:#6b6b6b;'></div>
<div class='a' style='left:85px;top:302.7px;width:249px;height:1.6px;background:#5a6358;'></div>
<div class='a' style='left:333px;top:273px;width:1px;height:308.5px;background:#5d5d5d;'></div>
<div class='a' style='left:243px;top:580.0px;width:91px;height:1.6px;background:#4d4d4d;'></div>
<div class='a' style='left:85px;top:273px;width:1px;height:31px;background:#6b6b6b;'></div>
<div class='a' style='left:84.6px;top:303.5px;width:1.7px;height:278px;background:#8468a8;'></div>
<div class='a' style='left:154.2px;top:303.5px;width:1.7px;height:278px;background:#8468a8;'></div>
<div class='a' style='left:85px;top:579.9px;width:70px;height:1.7px;background:#8468a8;'></div>
<div class='a' style='left:85px;top:302.9px;width:70px;height:1.7px;background:#8468a8;'></div>
<div class='a' style='left:242.0px;top:303.5px;width:1.7px;height:278px;background:#5079bc;'></div>
<div class='a' style='left:155.5px;top:579.9px;width:88px;height:1.7px;background:#5079bc;'></div>
<div class='a' style='left:155.5px;top:302.9px;width:88px;height:1.7px;background:#5079bc;'></div>
<div class='a' style='left:154.2px;top:273px;width:1.7px;height:30.5px;background:#d4656a;'></div>
<div class='a' style='left:242.0px;top:273px;width:1.7px;height:30.5px;background:#d4656a;'></div>
<div class='a' style='left:154.5px;top:272.2px;width:89px;height:1.7px;background:#d4656a;'></div>
<div class='a' style='left:152.8px;top:270.8px;width:4.4px;height:4.4px;background:#c04a60;'></div>
<div class='a' style='left:240.60000000000002px;top:270.8px;width:4.4px;height:4.4px;background:#c04a60;'></div>
<div class='a' style='left:83.2px;top:301.6px;width:4.4px;height:4.4px;background:#7e62a2;'></div>
<div class='a' style='left:152.8px;top:301.6px;width:4.4px;height:4.4px;background:#7e62a2;'></div>
<div class='a' style='left:240.60000000000002px;top:301.6px;width:4.4px;height:4.4px;background:#4a73b8;'></div>
<div class='a' style='left:83.2px;top:578.5999999999999px;width:4.4px;height:4.4px;background:#7e62a2;'></div>
<div class='a' style='left:152.8px;top:578.5999999999999px;width:4.4px;height:4.4px;background:#7e62a2;'></div>
<div class='a' style='left:240.60000000000002px;top:578.5999999999999px;width:4.4px;height:4.4px;background:#4a73b8;'></div>
<span class='t' style='left:100.50px;top:250.41px;font-size:21.5px;line-height:21.5px;color:#1a1a1a;letter-spacing:-0.443px;'>Compare Student Grow</span>
<span class='t' style='left:99.57px;top:280.71px;font-size:21.5px;line-height:21.5px;color:#1a1a1a;letter-spacing:-0.863px;'>Year</span>
<span class='t' style='left:175.74px;top:280.71px;font-size:21.5px;line-height:21.5px;color:#1a1a1a;letter-spacing:-0.027px;'>Male</span>
<span class='t' style='left:254.02px;top:280.71px;font-size:21.5px;line-height:21.5px;color:#1a1a1a;letter-spacing:-0.951px;'>Female</span>
<span class='t' style='left:106.64px;top:311.11px;font-size:21.5px;line-height:21.5px;color:#1a1a1a;letter-spacing:-0.961px;'>1989</span>
<span class='t' style='left:205.04px;top:311.11px;font-size:21.5px;line-height:21.5px;color:#1a1a1a;letter-spacing:-0.958px;'>100</span>
<span class='t' style='left:307.64px;top:311.11px;font-size:21.5px;line-height:21.5px;color:#1a1a1a;letter-spacing:-0.961px;'>70</span>
<span class='t' style='left:106.64px;top:341.91px;font-size:21.5px;line-height:21.5px;color:#1a1a1a;letter-spacing:-0.961px;'>1992</span>
<span class='t' style='left:205.04px;top:341.91px;font-size:21.5px;line-height:21.5px;color:#1a1a1a;letter-spacing:-0.958px;'>120</span>
<span class='t' style='left:307.64px;top:341.91px;font-size:21.5px;line-height:21.5px;color:#1a1a1a;letter-spacing:-0.961px;'>75</span>
<span class='t' style='left:106.64px;top:372.71px;font-size:21.5px;line-height:21.5px;color:#1a1a1a;letter-spacing:-0.961px;'>1995</span>
<span class='t' style='left:205.04px;top:372.71px;font-size:21.5px;line-height:21.5px;color:#1a1a1a;letter-spacing:-0.958px;'>170</span>
<span class='t' style='left:307.64px;top:372.71px;font-size:21.5px;line-height:21.5px;color:#1a1a1a;letter-spacing:-0.961px;'>90</span>
<span class='t' style='left:106.64px;top:403.51px;font-size:21.5px;line-height:21.5px;color:#1a1a1a;letter-spacing:-0.961px;'>1998</span>
<span class='t' style='left:205.04px;top:403.51px;font-size:21.5px;line-height:21.5px;color:#1a1a1a;letter-spacing:-0.958px;'>200</span>
<span class='t' style='left:296.64px;top:403.51px;font-size:21.5px;line-height:21.5px;color:#1a1a1a;letter-spacing:-0.958px;'>100</span>
<span class='t' style='left:106.64px;top:434.31px;font-size:21.5px;line-height:21.5px;color:#1a1a1a;letter-spacing:-0.961px;'>2001</span>
<span class='t' style='left:205.04px;top:434.31px;font-size:21.5px;line-height:21.5px;color:#1a1a1a;letter-spacing:-0.958px;'>280</span>
<span class='t' style='left:296.64px;top:434.31px;font-size:21.5px;line-height:21.5px;color:#1a1a1a;letter-spacing:-0.958px;'>120</span>
<span class='t' style='left:106.64px;top:465.11px;font-size:21.5px;line-height:21.5px;color:#1a1a1a;letter-spacing:-0.961px;'>2004</span>
<span class='t' style='left:205.04px;top:465.11px;font-size:21.5px;line-height:21.5px;color:#1a1a1a;letter-spacing:-0.958px;'>350</span>
<span class='t' style='left:296.64px;top:465.11px;font-size:21.5px;line-height:21.5px;color:#1a1a1a;letter-spacing:-0.958px;'>200</span>
<span class='t' style='left:106.64px;top:495.91px;font-size:21.5px;line-height:21.5px;color:#1a1a1a;letter-spacing:-0.961px;'>2007</span>
<span class='t' style='left:205.04px;top:495.91px;font-size:21.5px;line-height:21.5px;color:#1a1a1a;letter-spacing:-0.958px;'>430</span>
<span class='t' style='left:296.64px;top:495.91px;font-size:21.5px;line-height:21.5px;color:#1a1a1a;letter-spacing:-0.958px;'>240</span>
<span class='t' style='left:106.64px;top:526.71px;font-size:21.5px;line-height:21.5px;color:#1a1a1a;letter-spacing:-0.961px;'>2010</span>
<span class='t' style='left:205.04px;top:526.71px;font-size:21.5px;line-height:21.5px;color:#1a1a1a;letter-spacing:-0.958px;'>490</span>
<span class='t' style='left:296.64px;top:526.71px;font-size:21.5px;line-height:21.5px;color:#1a1a1a;letter-spacing:-0.958px;'>290</span>
<span class='t' style='left:106.64px;top:557.61px;font-size:21.5px;line-height:21.5px;color:#1a1a1a;letter-spacing:-0.961px;'>2013</span>
<span class='t' style='left:205.04px;top:557.61px;font-size:21.5px;line-height:21.5px;color:#1a1a1a;letter-spacing:-0.958px;'>570</span>
<span class='t' style='left:296.64px;top:557.61px;font-size:21.5px;line-height:21.5px;color:#1a1a1a;letter-spacing:-0.958px;'>350</span>
<div class='a' style='left:365px;top:272px;width:506px;height:319px;background:#fff;border:1px solid #d9d9d9;box-sizing:border-box;'></div>
<span class='t' style='left:507.89px;top:287.17px;font-size:20px;line-height:20px;color:#595959;font-weight:700;letter-spacing:-0.218px;'>Compare Student Grow</span>
<div class='a' style='left:508px;top:307px;width:220px;height:2px;background:#595959;'></div>
<div class='a' style='left:578px;top:328.5px;width:6px;height:6.5px;background:#7030a0;'></div>
<span class='t' style='left:587.50px;top:326.43px;font-size:11px;line-height:11px;color:#595959;letter-spacing:-0.211px;'>Male</span>
<div class='a' style='left:619px;top:328.5px;width:7px;height:6.5px;background:#1fa8e6;'></div>
<span class='t' style='left:629.00px;top:326.43px;font-size:11px;line-height:11px;color:#595959;letter-spacing:-0.615px;'>Female</span>
<svg class='a' style='left:427px;top:355px;' width='429' height='178.5' viewBox='0 0 429 178.5'><line x1='0' y1='176.50' x2='429' y2='176.50' stroke='#d9d9d9' stroke-width='1'/><line x1='0' y1='170.68' x2='429' y2='170.68' stroke='#ededed' stroke-width='1'/><line x1='0' y1='164.87' x2='429' y2='164.87' stroke='#ededed' stroke-width='1'/><line x1='0' y1='159.05' x2='429' y2='159.05' stroke='#ededed' stroke-width='1'/><line x1='0' y1='153.23' x2='429' y2='153.23' stroke='#ededed' stroke-width='1'/><line x1='0' y1='147.42' x2='429' y2='147.42' stroke='#d9d9d9' stroke-width='1'/><line x1='0' y1='141.60' x2='429' y2='141.60' stroke='#ededed' stroke-width='1'/><line x1='0' y1='135.78' x2='429' y2='135.78' stroke='#ededed' stroke-width='1'/><line x1='0' y1='129.97' x2='429' y2='129.97' stroke='#ededed' stroke-width='1'/><line x1='0' y1='124.15' x2='429' y2='124.15' stroke='#ededed' stroke-width='1'/><line x1='0' y1='118.33' x2='429' y2='118.33' stroke='#d9d9d9' stroke-width='1'/><line x1='0' y1='112.52' x2='429' y2='112.52' stroke='#ededed' stroke-width='1'/><line x1='0' y1='106.70' x2='429' y2='106.70' stroke='#ededed' stroke-width='1'/><line x1='0' y1='100.88' x2='429' y2='100.88' stroke='#ededed' stroke-width='1'/><line x1='0' y1='95.07' x2='429' y2='95.07' stroke='#ededed' stroke-width='1'/><line x1='0' y1='89.25' x2='429' y2='89.25' stroke='#d9d9d9' stroke-width='1'/><line x1='0' y1='83.43' x2='429' y2='83.43' stroke='#ededed' stroke-width='1'/><line x1='0' y1='77.62' x2='429' y2='77.62' stroke='#ededed' stroke-width='1'/><line x1='0' y1='71.80' x2='429' y2='71.80' stroke='#ededed' stroke-width='1'/><line x1='0' y1='65.98' x2='429' y2='65.98' stroke='#ededed' stroke-width='1'/><line x1='0' y1='60.17' x2='429' y2='60.17' stroke='#d9d9d9' stroke-width='1'/><line x1='0' y1='54.35' x2='429' y2='54.35' stroke='#ededed' stroke-width='1'/><line x1='0' y1='48.53' x2='429' y2='48.53' stroke='#ededed' stroke-width='1'/><line x1='0' y1='42.72' x2='429' y2='42.72' stroke='#ededed' stroke-width='1'/><line x1='0' y1='36.90' x2='429' y2='36.90' stroke='#ededed' stroke-width='1'/><line x1='0' y1='31.08' x2='429' y2='31.08' stroke='#d9d9d9' stroke-width='1'/><line x1='0' y1='25.27' x2='429' y2='25.27' stroke='#ededed' stroke-width='1'/><line x1='0' y1='19.45' x2='429' y2='19.45' stroke='#ededed' stroke-width='1'/><line x1='0' y1='13.63' x2='429' y2='13.63' stroke='#ededed' stroke-width='1'/><line x1='0' y1='7.82' x2='429' y2='7.82' stroke='#ededed' stroke-width='1'/><line x1='0' y1='2.00' x2='429' y2='2.00' stroke='#d9d9d9' stroke-width='1'/></svg>
<span class='t' style='left:410.88px;top:525.53px;font-size:11px;line-height:11px;color:#595959;'>0</span>
<span class='t' style='left:399.88px;top:496.45px;font-size:11px;line-height:11px;color:#595959;letter-spacing:-0.620px;'>100</span>
<span class='t' style='left:399.88px;top:467.36px;font-size:11px;line-height:11px;color:#595959;letter-spacing:-0.620px;'>200</span>
<span class='t' style='left:399.88px;top:438.28px;font-size:11px;line-height:11px;color:#595959;letter-spacing:-0.620px;'>300</span>
<span class='t' style='left:399.88px;top:409.20px;font-size:11px;line-height:11px;color:#595959;letter-spacing:-0.620px;'>400</span>
<span class='t' style='left:399.88px;top:380.11px;font-size:11px;line-height:11px;color:#595959;letter-spacing:-0.620px;'>500</span>
<span class='t' style='left:399.88px;top:351.03px;font-size:11px;line-height:11px;color:#595959;letter-spacing:-0.620px;'>600</span>
<div class='a' style='left:438.6px;top:502.42px;width:10.8px;height:29.08px;background:#7030a0;'></div>
<div class='a' style='left:452.8px;top:511.14px;width:10.8px;height:20.36px;background:#12a9ea;'></div>
<span class='t' style='left:435.47px;top:484.35px;font-size:11px;line-height:11px;color:#404040;letter-spacing:-0.620px;'>100</span>
<span class='t' style='left:452.42px;top:493.07px;font-size:11px;line-height:11px;color:#404040;letter-spacing:-0.625px;'>70</span>
<span class='t' style='left:439.52px;top:541.43px;font-size:11px;line-height:11px;color:#595959;letter-spacing:-0.621px;'>1989</span>
<div class='a' style='left:486.3px;top:496.6px;width:10.8px;height:34.9px;background:#7030a0;'></div>
<div class='a' style='left:500.5px;top:509.69px;width:10.8px;height:21.81px;background:#12a9ea;'></div>
<span class='t' style='left:483.14px;top:478.53px;font-size:11px;line-height:11px;color:#404040;letter-spacing:-0.620px;'>120</span>
<span class='t' style='left:500.09px;top:491.62px;font-size:11px;line-height:11px;color:#404040;letter-spacing:-0.625px;'>75</span>
<span class='t' style='left:487.19px;top:541.43px;font-size:11px;line-height:11px;color:#595959;letter-spacing:-0.621px;'>1992</span>
<div class='a' style='left:534.0px;top:482.06px;width:10.8px;height:49.44px;background:#7030a0;'></div>
<div class='a' style='left:548.2px;top:505.32px;width:10.8px;height:26.18px;background:#12a9ea;'></div>
<span class='t' style='left:530.81px;top:463.99px;font-size:11px;line-height:11px;color:#404040;letter-spacing:-0.620px;'>170</span>
<span class='t' style='left:547.75px;top:487.25px;font-size:11px;line-height:11px;color:#404040;letter-spacing:-0.625px;'>90</span>
<span class='t' style='left:534.86px;top:541.43px;font-size:11px;line-height:11px;color:#595959;letter-spacing:-0.621px;'>1995</span>
<div class='a' style='left:581.6px;top:473.33px;width:10.8px;height:58.17px;background:#7030a0;'></div>
<div class='a' style='left:595.8px;top:502.42px;width:10.8px;height:29.08px;background:#12a9ea;'></div>
<span class='t' style='left:578.47px;top:455.26px;font-size:11px;line-height:11px;color:#404040;letter-spacing:-0.620px;'>200</span>
<span class='t' style='left:592.67px;top:484.35px;font-size:11px;line-height:11px;color:#404040;letter-spacing:-0.620px;'>100</span>
<span class='t' style='left:582.52px;top:541.43px;font-size:11px;line-height:11px;color:#595959;letter-spacing:-0.621px;'>1998</span>
<div class='a' style='left:629.3px;top:450.07px;width:10.8px;height:81.43px;background:#7030a0;'></div>
<div class='a' style='left:643.5px;top:496.6px;width:10.8px;height:34.9px;background:#12a9ea;'></div>
<span class='t' style='left:626.14px;top:432.00px;font-size:11px;line-height:11px;color:#404040;letter-spacing:-0.620px;'>280</span>
<span class='t' style='left:640.34px;top:478.53px;font-size:11px;line-height:11px;color:#404040;letter-spacing:-0.620px;'>120</span>
<span class='t' style='left:630.19px;top:541.43px;font-size:11px;line-height:11px;color:#595959;letter-spacing:-0.621px;'>2001</span>
<div class='a' style='left:677.0px;top:429.71px;width:10.8px;height:101.79px;background:#7030a0;'></div>
<div class='a' style='left:691.2px;top:473.33px;width:10.8px;height:58.17px;background:#12a9ea;'></div>
<span class='t' style='left:673.81px;top:411.64px;font-size:11px;line-height:11px;color:#404040;letter-spacing:-0.620px;'>350</span>
<span class='t' style='left:688.01px;top:455.26px;font-size:11px;line-height:11px;color:#404040;letter-spacing:-0.620px;'>200</span>
<span class='t' style='left:677.86px;top:541.43px;font-size:11px;line-height:11px;color:#595959;letter-spacing:-0.621px;'>2004</span>
<div class='a' style='left:724.6px;top:406.44px;width:10.8px;height:125.06px;background:#7030a0;'></div>
<div class='a' style='left:738.8px;top:461.7px;width:10.8px;height:69.8px;background:#12a9ea;'></div>
<span class='t' style='left:721.47px;top:388.37px;font-size:11px;line-height:11px;color:#404040;letter-spacing:-0.620px;'>430</span>
<span class='t' style='left:735.67px;top:443.63px;font-size:11px;line-height:11px;color:#404040;letter-spacing:-0.620px;'>240</span>
<span class='t' style='left:725.52px;top:541.43px;font-size:11px;line-height:11px;color:#595959;letter-spacing:-0.621px;'>2007</span>
<div class='a' style='left:772.3px;top:388.99px;width:10.8px;height:142.51px;background:#7030a0;'></div>
<div class='a' style='left:786.5px;top:447.16px;width:10.8px;height:84.34px;background:#12a9ea;'></div>
<span class='t' style='left:769.14px;top:370.92px;font-size:11px;line-height:11px;color:#404040;letter-spacing:-0.620px;'>490</span>
<span class='t' style='left:783.34px;top:429.09px;font-size:11px;line-height:11px;color:#404040;letter-spacing:-0.620px;'>290</span>
<span class='t' style='left:773.19px;top:541.43px;font-size:11px;line-height:11px;color:#595959;letter-spacing:-0.621px;'>2010</span>
<div class='a' style='left:820.0px;top:365.73px;width:10.8px;height:165.78px;background:#7030a0;'></div>
<div class='a' style='left:834.2px;top:429.71px;width:10.8px;height:101.79px;background:#12a9ea;'></div>
<span class='t' style='left:816.81px;top:347.65px;font-size:11px;line-height:11px;color:#404040;letter-spacing:-0.620px;'>570</span>
<span class='t' style='left:831.01px;top:411.64px;font-size:11px;line-height:11px;color:#404040;letter-spacing:-0.620px;'>350</span>
<span class='t' style='left:820.86px;top:541.43px;font-size:11px;line-height:11px;color:#595959;letter-spacing:-0.621px;'>2013</span>
<span class='t' style='left:629.97px;top:562.13px;font-size:11px;line-height:11px;color:#595959;letter-spacing:-0.059px;'>Year</span>
<span class='t' style='left:384.00px;top:460.43px;font-size:11px;line-height:11px;color:#666;font-weight:700;letter-spacing:0.007px;transform:rotate(-90deg);transform-origin:0 0;'>Student</span>
<div class='a' style='left:872px;top:272px;width:395px;height:287px;background:#fff;'></div>
<div class='a' style='left:872px;top:271.5px;width:395px;height:2px;background:#b5b5b5;'></div>
<div class='a' style='left:871.5px;top:272px;width:2px;height:287px;background:#b5b5b5;'></div>
<div class='a' style='left:872px;top:557.5px;width:395px;height:2px;background:#b5b5b5;'></div>
<span class='t' style='left:1078.62px;top:284.38px;font-size:18px;line-height:18px;color:#595959;letter-spacing:-0.754px;'>Male</span>
<svg class='a' style='left:990px;top:305px;' width='220' height='225' viewBox='0 0 220 225'><path d='M107.00,111.50 L107.00,16.00 A91.5,95.5 0 0 1 128.02,18.56 Z' fill='#4472c4' stroke='#d9d3c8' stroke-width='1.0'/><path d='M107.00,111.50 L128.02,18.56 A91.5,95.5 0 0 1 151.67,28.16 Z' fill='#ed7d31' stroke='#d9d3c8' stroke-width='1.0'/><path d='M107.00,111.50 L151.67,28.16 A91.5,95.5 0 0 1 178.91,52.45 Z' fill='#a5a5a5' stroke='#d9d3c8' stroke-width='1.0'/><path d='M107.00,111.50 L178.91,52.45 A91.5,95.5 0 0 1 196.62,92.26 Z' fill='#ffc000' stroke='#d9d3c8' stroke-width='1.0'/><path d='M107.00,111.50 L196.62,92.26 A91.5,95.5 0 0 1 189.54,152.72 Z' fill='#5b9bd5' stroke='#d9d3c8' stroke-width='1.0'/><path d='M107.00,111.50 L189.54,152.72 A91.5,95.5 0 0 1 135.17,202.36 Z' fill='#70ad47' stroke='#d9d3c8' stroke-width='1.0'/><path d='M107.00,111.50 L135.17,202.36 A91.5,95.5 0 0 1 49.18,185.52 Z' fill='#264478' stroke='#d9d3c8' stroke-width='1.0'/><path d='M107.00,111.50 L49.18,185.52 A91.5,95.5 0 0 1 18.33,87.94 Z' fill='#9e480e' stroke='#d9d3c8' stroke-width='1.0'/><path d='M107.00,111.50 L18.33,87.94 A91.5,95.5 0 0 1 107.00,16.00 Z' fill='#636363' stroke='#d9d3c8' stroke-width='1.0'/><ellipse cx='107' cy='111.5' rx='91.5' ry='95.5' fill='none' stroke='#9a9a9a' stroke-width='1' stroke-dasharray='2 1.5'/></svg>
<svg class='a' style='left:990px;top:305px;' width='220' height='225' viewBox='0 0 220 225'><circle cx='107.0' cy='16.0' r='2.6' fill='#fff' stroke='#2e8ad8' stroke-width='1.6'/><circle cx='128.0' cy='18.6' r='2.6' fill='#fff' stroke='#2e8ad8' stroke-width='1.6'/><circle cx='151.7' cy='28.2' r='2.6' fill='#fff' stroke='#2e8ad8' stroke-width='1.6'/><circle cx='178.9' cy='52.5' r='2.6' fill='#fff' stroke='#2e8ad8' stroke-width='1.6'/><circle cx='196.6' cy='92.3' r='2.6' fill='#fff' stroke='#2e8ad8' stroke-width='1.6'/><circle cx='189.5' cy='152.7' r='2.6' fill='#fff' stroke='#2e8ad8' stroke-width='1.6'/><circle cx='135.2' cy='202.4' r='2.6' fill='#fff' stroke='#2e8ad8' stroke-width='1.6'/><circle cx='49.2' cy='185.5' r='2.6' fill='#fff' stroke='#2e8ad8' stroke-width='1.6'/><circle cx='18.3' cy='87.9' r='2.6' fill='#fff' stroke='#2e8ad8' stroke-width='1.6'/><circle cx='107' cy='111.5' r='2.6' fill='#fff' stroke='#2e8ad8' stroke-width='1.6'/></svg>
<div class='a' style='left:917.0px;top:536px;width:4px;height:4px;background:#4472c4;'></div>
<span class='t' style='left:926.00px;top:532.43px;font-size:11px;line-height:11px;color:#595959;letter-spacing:-0.746px;'>1989</span>
<div class='a' style='left:958.8px;top:536px;width:4px;height:4px;background:#ed7d31;'></div>
<span class='t' style='left:967.75px;top:532.43px;font-size:11px;line-height:11px;color:#595959;letter-spacing:-0.746px;'>1992</span>
<div class='a' style='left:1000.5px;top:536px;width:4px;height:4px;background:#a5a5a5;'></div>
<span class='t' style='left:1009.50px;top:532.43px;font-size:11px;line-height:11px;color:#595959;letter-spacing:-0.746px;'>1995</span>
<div class='a' style='left:1042.2px;top:536px;width:4px;height:4px;background:#ffc000;'></div>
<span class='t' style='left:1051.25px;top:532.43px;font-size:11px;line-height:11px;color:#595959;letter-spacing:-0.746px;'>1998</span>
<div class='a' style='left:1084.0px;top:536px;width:4px;height:4px;background:#5b9bd5;'></div>
<span class='t' style='left:1093.00px;top:532.43px;font-size:11px;line-height:11px;color:#595959;letter-spacing:-0.746px;'>2001</span>
<div class='a' style='left:1125.8px;top:536px;width:4px;height:4px;background:#70ad47;'></div>
<span class='t' style='left:1134.75px;top:532.43px;font-size:11px;line-height:11px;color:#595959;letter-spacing:-0.746px;'>2004</span>
<div class='a' style='left:1167.5px;top:536px;width:4px;height:4px;background:#264478;'></div>
<span class='t' style='left:1176.50px;top:532.43px;font-size:11px;line-height:11px;color:#595959;letter-spacing:-0.746px;'>2007</span>
<div class='a' style='left:1209.2px;top:536px;width:4px;height:4px;background:#9e480e;'></div>
<span class='t' style='left:1218.25px;top:532.43px;font-size:11px;line-height:11px;color:#595959;letter-spacing:-0.746px;'>2010</span>
<div class='a' style='left:1251.0px;top:536px;width:4px;height:4px;background:#636363;'></div>
<div class='a' style='left:1258px;top:531px;width:8px;height:14px;overflow:hidden'><span class='t' style='left:1.5px;top:1.4px;font-size:11px;line-height:11px;color:#595959'>2013</span></div>
<svg class='a' style='left:860px;top:260px;' width='250' height='310' viewBox='0 0 250 310'><circle cx='12' cy='12' r='4.2' fill='#fff' stroke='#7a7a7a' stroke-width='1.3'/><circle cx='237' cy='12' r='4.2' fill='#fff' stroke='#7a7a7a' stroke-width='1.3'/><circle cx='12' cy='155' r='4.2' fill='#fff' stroke='#7a7a7a' stroke-width='1.3'/><circle cx='12' cy='298' r='4.2' fill='#fff' stroke='#7a7a7a' stroke-width='1.3'/><circle cx='237' cy='298' r='4.2' fill='#fff' stroke='#7a7a7a' stroke-width='1.3'/></svg>
<svg class='a' style='left:1054px;top:366px;' width='28' height='36' viewBox='0 0 28 36'>
<path d='M11,4 l3.4,3.6 h-2 v3 h3 v-2 l3.6,3.4 l-3.6,3.4 v-2 h-3 v3 h2 l-3.4,3.6 l-3.4,-3.6 h2 v-3 h-3 v2 l-3.6,-3.4 l3.6,-3.4 v2 h3 v-3 h-2z' fill='#f2f2f2' stroke='#444' stroke-width='0.7' stroke-dasharray='1.2 0.8'/>
<circle cx='11' cy='6.6' r='1.2' fill='#111'/><circle cx='5.2' cy='12' r='1.2' fill='#111'/><circle cx='16.8' cy='12' r='1.2' fill='#111'/>
<path d='M10.6,12.6 v15.4 l3.4,-3.2 l2.9,6.4 l2.3,-1.05 l-2.9,-6.2 h4.7z' fill='#fff' stroke='#1a1a1a' stroke-width='1'/>
</svg>
<div class='a' style='left:1268px;top:206px;width:12px;height:468px;background:#fff;'></div>
<div class='a' style='left:1266px;top:219px;width:2.5px;height:455px;background:#c2c2c2;'></div>
<div class='a' style='left:1269px;top:206px;width:11px;height:14px;background:#fff;border:1px solid #cfcfcf;box-sizing:border-box;'></div>
<svg class='a' style='left:1270px;top:209px;' width='10' height='7' viewBox='0 0 10 7'><path d='M1.4,6 h7.2 l-3.6,-4.6z' fill='#666'/></svg>
<div class='a' style='left:1270px;top:592px;width:10px;height:68px;background:#cdcdcd;'></div>
<svg class='a' style='left:1270px;top:664px;' width='10' height='7' viewBox='0 0 10 7'><path d='M1.4,1 h7.2 l-3.6,4.6z' fill='#666'/></svg>
<svg class='a' style='left:1258px;top:204px;' width='10' height='8' viewBox='0 0 10 8'><path d='M4.4,3 h4.6 l-2.3,2.8z' fill='#666'/></svg>
<div class='a' style='left:0px;top:674px;width:1280px;height:29px;background:#e6e6e6;'></div>
<div class='a' style='left:0px;top:674px;width:1267px;height:1px;background:#b9b9b9;'></div>
<svg class='a' style='left:20px;top:680px;' width='50' height='14' viewBox='0 0 50 14'><path d='M10,2.6 l-4,4.4 l4,4.4z' fill='#c9c9c9'/><path d='M34,2.6 l4,4.4 l-4,4.4z' fill='#c9c9c9'/></svg>
<div class='a' style='left:95px;top:677px;width:1px;height:22px;background:#a5a5a5;'></div>
<span class='t' style='left:107.00px;top:681.92px;font-size:12px;line-height:12px;color:#555;letter-spacing:-0.341px;'>Sheet1</span>
<div class='a' style='left:156px;top:674px;width:60px;height:25px;background:#fff;'></div>
<div class='a' style='left:156px;top:697px;width:60px;height:2px;background:#217346;'></div>
<span class='t' style='left:167.00px;top:681.92px;font-size:12px;line-height:12px;color:#217346;font-weight:700;letter-spacing:-0.227px;'>Sheet2</span>
<svg class='a' style='left:246px;top:678px;' width='18' height='18' viewBox='0 0 18 18'><circle cx='9' cy='9' r='7' fill='none' stroke='#777' stroke-width='1.2'/><path d='M9,5.2 v7.6 M5.2,9 h7.6' stroke='#666' stroke-width='1.4'/></svg>
<svg class='a' style='left:769px;top:680px;' width='6' height='16' viewBox='0 0 6 16'><g fill='#b0b0b0'><circle cx='3' cy='3' r='1'/><circle cx='3' cy='8' r='1'/><circle cx='3' cy='13' r='1'/></g></svg>
<div class='a' style='left:787px;top:681px;width:15px;height:15px;background:#fff;border:1px solid #c4c4c4;box-sizing:border-box;'></div>
<svg class='a' style='left:790px;top:684px;' width='9' height='9' viewBox='0 0 9 9'><path d='M6.6,1 v7 l-4.4,-3.5z' fill='#555'/></svg>
<div class='a' style='left:802px;top:681px;width:425px;height:15px;background:#fff;border:1px solid #c4c4c4;box-sizing:border-box;'></div>
<div class='a' style='left:1229px;top:682px;width:22px;height:14px;background:#d6d6d6;'></div>
<div class='a' style='left:1254px;top:681px;width:14px;height:15px;background:#fff;border:1px solid #c4c4c4;box-sizing:border-box;'></div>
<svg class='a' style='left:1256.5px;top:684px;' width='9' height='9' viewBox='0 0 9 9'><path d='M2.4,1 v7 l4.4,-3.5z' fill='#555'/></svg>
<div class='a' style='left:0px;top:703px;width:1280px;height:17px;background:#f3f3f3;'></div>
<div class='a' style='left:0px;top:702.5px;width:1280px;height:1px;background:#d0d0d0;'></div>
<span class='t' style='left:8.00px;top:706.78px;font-size:11.5px;line-height:11.5px;color:#555;letter-spacing:-0.650px;'>Ready</span>
<span class='t' style='left:764.00px;top:706.78px;font-size:11.5px;line-height:11.5px;color:#555;letter-spacing:-0.616px;'>Average: 1151.055556</span>
<span class='t' style='left:882.00px;top:706.78px;font-size:11.5px;line-height:11.5px;color:#555;letter-spacing:-0.319px;'>Count: 20</span>
<span class='t' style='left:944.00px;top:706.78px;font-size:11.5px;line-height:11.5px;color:#555;letter-spacing:-0.702px;'>Sum: 20719</span>
<div class='a' style='left:1017px;top:703px;width:35px;height:17px;background:#d2d2d2;'></div>
<svg class='a' style='left:1027px;top:705px;' width='14' height='14' viewBox='0 0 14 14'><g fill='none' stroke='#555' stroke-width='1'><rect x='1.5' y='1.5' width='11' height='11'/><path d='M5.2,1.5 v11 M8.8,1.5 v11 M1.5,5.2 h11 M1.5,8.8 h11'/></g></svg>
<svg class='a' style='left:1063px;top:705px;' width='14' height='14' viewBox='0 0 14 14'><g fill='none' stroke='#555' stroke-width='1'><rect x='1.5' y='1.5' width='11' height='11'/><rect x='4' y='4' width='6' height='6'/></g></svg>
<svg class='a' style='left:1098px;top:705px;' width='14' height='14' viewBox='0 0 14 14'><g fill='none' stroke='#555' stroke-width='1'><rect x='1.5' y='1.5' width='11' height='11'/><path d='M5,1.5 v6 h4.4 v-6'/></g></svg>
<span class='t' style='left:1127.66px;top:705.42px;font-size:12px;line-height:12px;color:#444;font-weight:700;'>–</span>
<div class='a' style='left:1139px;top:711.5px;width:94px;height:1px;background:#8a8a8a;'></div>
<div class='a' style='left:1184px;top:706px;width:3px;height:12px;background:#444;'></div>
<span class='t' style='left:1234.70px;top:705.42px;font-size:13px;line-height:13px;color:#444;font-weight:700;'>+</span>
<span class='t' style='left:1253.00px;top:706.78px;font-size:11.5px;line-height:11.5px;color:#555;letter-spacing:-0.855px;'>100%</span>
<div class='a' style='left:0px;top:0px;width:1px;height:720px;background:rgba(0,0,0,0.3);'></div>
</body></html>
